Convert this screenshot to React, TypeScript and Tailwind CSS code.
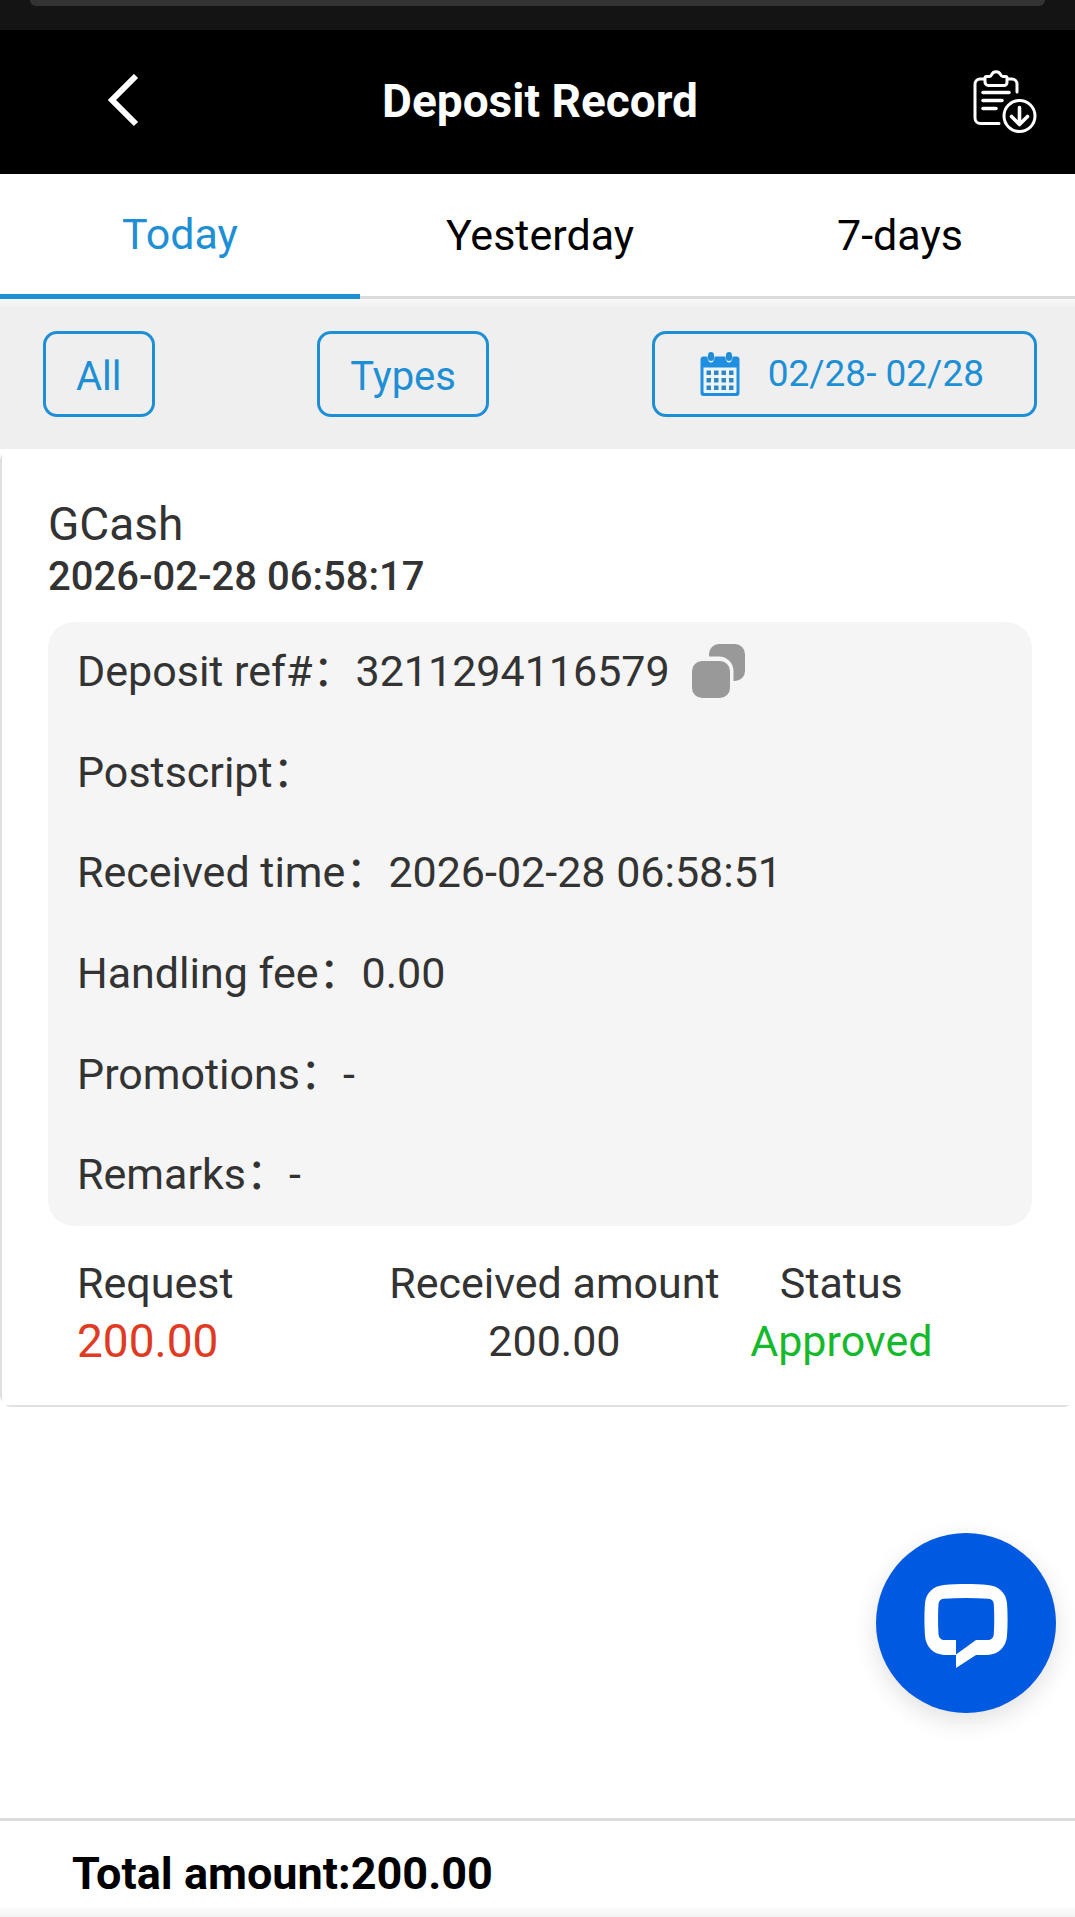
import { useState } from "react";
import clsx from "clsx";

const TABS = ["Today", "Yesterday", "7-days"];

const record = {
  method: "GCash",
  createdAt: "2026-02-28 06:58:17",
  request: "200.00",
  received: "200.00",
  status: "Approved",
  details: [
    { label: "Deposit ref#", value: "3211294116579", copyable: true },
    { label: "Postscript", value: "" },
    { label: "Received time", value: "2026-02-28 06:58:51" },
    { label: "Handling fee", value: "0.00" },
    { label: "Promotions", value: "-" },
    { label: "Remarks", value: "-" },
  ],
};

export default function App() {
  const [activeTab, setActiveTab] = useState("Today");

  return (
    <div className="flex min-h-screen flex-col overflow-x-hidden bg-white font-[Roboto,'Noto_Sans_CJK_SC',sans-serif] text-[#333]">
      <div className="h-[30px] bg-[#141414] px-[30px]">
        <div className="h-[6px] rounded-b-[12px] bg-[#333]" />
      </div>

      <header className="-mr-[5px] grid h-36 grid-cols-[1fr_auto_1fr] items-center bg-black px-[43px] pb-[2px] text-white">
        <button type="button" aria-label="Back" className="ml-16 justify-self-start">
          <BackIcon />
        </button>
        <h1 className="text-[46px] leading-[56px] font-bold">Deposit Record</h1>
        <button type="button" aria-label="Export records" className="justify-self-end">
          <ExportIcon />
        </button>
      </header>

      <nav className="-mr-[5px] grid h-[125px] grid-cols-3">
        {TABS.map((tab) => (
          <button
            key={tab}
            type="button"
            onClick={() => setActiveTab(tab)}
            className={clsx(
              "flex items-center justify-center text-[43px]",
              tab === activeTab
                ? "border-b-[5px] border-[#1e8fd5] text-[#1e8fd5]"
                : "border-b-[3px] border-[#dcdcdc] text-black",
            )}
          >
            {tab}
          </button>
        ))}
      </nav>

      <div className="flex justify-between bg-linear-to-b from-[#f8f8f8] to-[#efefef] to-6% pt-8 pr-[38px] pb-8 pl-[43px] text-[#1e8fd5]">
        <FilterButton>All</FilterButton>
        <FilterButton>Types</FilterButton>
        <button
          type="button"
          className="flex h-[86px] items-center gap-7 rounded-[14px] border-3 border-[#1e8fd5] pr-[50px] pl-[45px] text-[37px]"
        >
          <CalendarIcon />
          02/28- 02/28
        </button>
      </div>

      <main className="flex-1">
        <article className="overflow-hidden rounded-[12px]">
          <div className="border-b-2 border-l-2 border-[#e0e0e0] pt-[49px] pr-[43px] pb-[35px] pl-[46px]">
            <h2 className="text-[46px] leading-[53px]">{record.method}</h2>
            <p className="text-[40px] leading-[52px] font-medium">{record.createdAt}</p>

            <dl className="mt-[19px] grid h-[604px] auto-rows-fr rounded-[26px] bg-[#f5f5f5] px-[29px] text-[43px]">
              {record.details.map((item) => (
                <div key={item.label} className="flex items-center pb-[2px]">
                  <dt>{item.label}：</dt>
                  <dd>{item.value}</dd>
                  {item.copyable ? (
                    <button type="button" aria-label="Copy reference" className="ml-[22px]">
                      <CopyIcon />
                    </button>
                  ) : null}
                </div>
              ))}
            </dl>

            <dl className="grid grid-cols-[313fr_329fr_244fr] pt-7 pr-[69px] pl-[29px] text-[43px] leading-[58px]">
              <div>
                <dt>Request</dt>
                <dd className="text-[46px] text-[#e03a22]">{record.request}</dd>
              </div>
              <div className="text-center whitespace-nowrap">
                <dt>Received amount</dt>
                <dd>{record.received}</dd>
              </div>
              <div className="text-center">
                <dt>Status</dt>
                <dd className="text-[#15b92c]">{record.status}</dd>
              </div>
            </dl>
          </div>
        </article>
      </main>

      <footer className="h-[99px] border-t-3 border-[#dcdcdc] bg-linear-to-b from-white from-88% to-[#f3f3f3] px-[72px] pt-[25px] text-[45px] leading-[56px] font-bold text-black">
        Total amount:{record.received}
      </footer>

      <button
        type="button"
        aria-label="Open chat"
        className="fixed right-[19px] bottom-[204px] flex size-[180px] items-center justify-center rounded-full bg-[#0059e1] pt-[6px] shadow-[0_8px_24px_rgba(0,0,0,0.12)]"
      >
        <ChatIcon />
      </button>
    </div>
  );
}

function FilterButton({ children }: { children: string }) {
  return (
    <button
      type="button"
      className="h-[86px] rounded-[14px] border-3 border-[#1e8fd5] px-[30px] pt-[6px] text-[40px]"
    >
      {children}
    </button>
  );
}

function BackIcon() {
  return (
    <svg width="32" height="54" viewBox="0 0 32 54" fill="none">
      <path d="M29 2 L5 26 L29 50" stroke="currentColor" strokeWidth="6" />
    </svg>
  );
}

// clipboard with a download badge
function ExportIcon() {
  return (
    <svg
      width="64"
      height="64"
      viewBox="0 0 64 64"
      fill="none"
      stroke="currentColor"
      strokeWidth="3"
      strokeLinecap="round"
      strokeLinejoin="round"
    >
      <path d="M11 10H7.500a5 5 0 0 0-5.500 5.500V49a5.500 5.500 0 0 0 5.500 5.500H26" />
      <path d="M35 10h4a5 5 0 0 1 5 5v8" />
      <path d="M13.500 7.500h3c1.500 0 1.700-.8 2.200-2a5 5 0 0 1 8.800 0c.5 1.200.9 2 2.400 2h2.600a1.500 1.500 0 0 1 1.500 1.500v4.500a3 3 0 0 1-3 3H15.500a3.500 3.500 0 0 1-3.500-3.500V9a1.500 1.500 0 0 1 1.500-1.500Z" />
      <path d="M10 23.500h26M10 31.500h19M10 39.500h13" strokeWidth="3.600" />
      <circle cx="46.500" cy="47" r="15.500" />
      <path d="M46.500 38.500v16M38.500 47.500l8 8 8-8" strokeWidth="3.600" />
    </svg>
  );
}

function CalendarIcon() {
  return (
    <svg width="40" height="44" viewBox="0 0 40 44" fill="none">
      <path
        d="M3.500 4.500h4c0 4 1.500 6 3.500 6s3.500-2 3.500-6h11c0 4 1.500 6 3.500 6s3.500-2 3.500-6h4a3 3 0 0 1 3 3V41a3 3 0 0 1-3 3h-33a3 3 0 0 1-3-3V7.500a3 3 0 0 1 3-3Z"
        fill="#1e8fe0"
      />
      <path d="M3.500 15.500h33v24a1.500 1.500 0 0 1-1.500 1.500H5a1.500 1.500 0 0 1-1.500-1.500Z" fill="#eef4f8" />
      <rect x="8" y="0" width="6" height="9" rx="3" fill="#1e8fd5" />
      <rect x="26" y="0" width="6" height="9" rx="3" fill="#1e8fd5" />
      {[18.500, 26, 33.500].map((y) =>
        [6.500, 14, 21.500, 29].map((x) => (
          <rect key={`${x}-${y}`} x={x} y={y} width="4.500" height="4.500" fill="#2d86c6" />
        )),
      )}
    </svg>
  );
}

function CopyIcon() {
  return (
    <svg width="54" height="54" viewBox="0 0 54 54" fill="#999">
      <rect x="0" y="17" width="38" height="37" rx="10" />
      <path d="M17 12.500V10A10 10 0 0 1 27 0h16a10 10 0 0 1 10 10v17a10 10 0 0 1-10 10h-1.500V27A14.500 14.500 0 0 0 27 12.500Z" />
    </svg>
  );
}

function ChatIcon() {
  return (
    <svg width="84" height="84" viewBox="0 0 84 84" fill="#fff">
      <path
        fillRule="evenodd"
        d="M20 1C34-.3 50-.3 64 1 75 2 82 9 83 19c.8 11 .8 22 0 33-1 11-8 18-19 19H52L32 84V56H21c-4 0-6-2-6.500-6-.6-10-.6-20 0-30 .3-3 2-5 5-5.300 15-.8 30-.8 45 0 3 .3 5 2 5.300 5.300.6 10 .6 20 0 30-.4 4-2.500 6-6.500 6H52L32 70.500v.5H20C9 70 2 63 1 52 .2 41 .2 30 1 19 2 9 9 2 20 1Z"
      />
    </svg>
  );
}
